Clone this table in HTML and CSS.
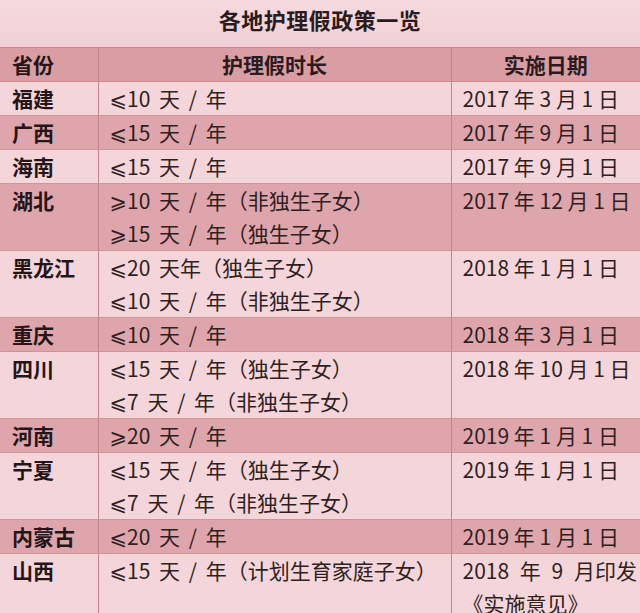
FILE: index.html
```html
<!DOCTYPE html>
<html lang="zh">
<head>
<meta charset="utf-8">
<title>各地护理假政策一览</title>
<link rel="stylesheet" href="styles.css">
</head>
<body>
<div class="page">
  <div class="title">各地护理假政策一览</div>
  <table class="policy">
    <colgroup>
      <col class="c1"><col class="c2"><col class="c3">
    </colgroup>
    <thead>
      <tr class="head">
        <th class="prov">省份</th>
        <th>护理假时长</th>
        <th>实施日期</th>
      </tr>
    </thead>
    <tbody>
      <tr class="light"><td class="prov">福建</td><td>⩽10 天 / 年</td><td>2017 年 3 月 1 日</td></tr>
      <tr class="dark"><td class="prov">广西</td><td>⩽15 天 / 年</td><td>2017 年 9 月 1 日</td></tr>
      <tr class="light"><td class="prov">海南</td><td>⩽15 天 / 年</td><td>2017 年 9 月 1 日</td></tr>
      <tr class="dark two"><td class="prov">湖北</td><td>⩾10 天 / 年（非独生子女）<br>⩾15 天 / 年（独生子女）</td><td>2017 年 12 月 1 日</td></tr>
      <tr class="light two"><td class="prov">黑龙江</td><td>⩽20 天年（独生子女）<br>⩽10 天 / 年（非独生子女）</td><td>2018 年 1 月 1 日</td></tr>
      <tr class="dark"><td class="prov">重庆</td><td>⩽10 天 / 年</td><td>2018 年 3 月 1 日</td></tr>
      <tr class="light two"><td class="prov">四川</td><td>⩽15 天 / 年（独生子女）<br>⩽7 天 / 年（非独生子女）</td><td>2018 年 10 月 1 日</td></tr>
      <tr class="dark"><td class="prov">河南</td><td>⩾20 天 / 年</td><td>2019 年 1 月 1 日</td></tr>
      <tr class="light two"><td class="prov">宁夏</td><td>⩽15 天 / 年（独生子女）<br>⩽7 天 / 年（非独生子女）</td><td>2019 年 1 月 1 日</td></tr>
      <tr class="dark"><td class="prov">内蒙古</td><td>⩽20 天 / 年</td><td>2019 年 1 月 1 日</td></tr>
      <tr class="light two"><td class="prov">山西</td><td>⩽15 天 / 年（计划生育家庭子女）</td><td><span class="wide">2018 年 9 月印发</span><br>《实施意见》</td></tr>
    </tbody>
  </table>
</div>
</body>
</html>
```
FILE: styles.css
```css
html, body {
  margin: 0;
  padding: 0;
  background: #f3d5d9;
}
.page {
  width: 640px;
  height: 613px;
  overflow: hidden;
  background: #f3d5d9;
  font-family: "Noto Sans CJK SC", "DejaVu Sans", sans-serif;
  color: #2a1c1e;
}
.title {
  height: 47px;
  line-height: 38px;
  text-align: center;
  font-size: 22px;
  letter-spacing: 0.5px;
  font-weight: 700;
  color: #2a1c1e;
  background: linear-gradient(#f5dadd, #f0d0d5);
  border-bottom: 1px solid #c98990;
}
.policy {
  width: 640px;
  border-collapse: collapse;
  table-layout: fixed;
}
.c1 { width: 98px; }
.c2 { width: 353px; }
.c3 { width: 189px; }
.policy th,
.policy td {
  padding: 0;
  font-size: 21px;
  line-height: 33px;
  height: 33px;
  vertical-align: top;
  border-bottom: 1px solid #d0939a;
  border-left: 1px solid #c4838b;
  white-space: nowrap;
  overflow: hidden;
}
.policy th:first-child,
.policy td:first-child {
  border-left: none;
}
.policy th {
  font-weight: 700;
  text-align: center;
  background: #da9da4;
  border-bottom-color: #c98990;
}
.policy th.prov {
  text-align: left;
}
.policy td {
  font-weight: 400;
  text-align: left;
  padding-left: 11px;
  color: #2e1f21;
}
.policy .prov {
  padding-left: 12px;
  font-weight: 700;
  color: #241618;
}
.policy td:nth-child(2) {
  padding-left: 11px;
  word-spacing: 4px;
}
.policy td:nth-child(3) {
  padding-left: 11px;
}
.light td { background: #f4d6da; }
.dark td { background: #dfa5ac; }
.two td { height: 66px; }
.wide {
  word-spacing: 6px;
}
```
